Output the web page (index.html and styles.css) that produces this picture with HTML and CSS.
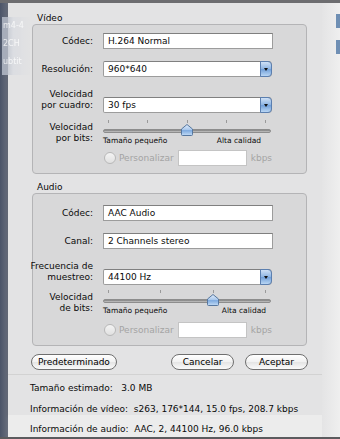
FILE: index.html
```html
<!DOCTYPE html>
<html lang="es">

<head>
  <meta charset="utf-8">
  <title>Ajustes</title>
  <meta name="viewport" content="width=device-width, initial-scale=1.0">
  <link rel="stylesheet" href="styles.css">
</head>

<body>
  <div class="screen">
    <!-- window behind the sheet, seen through it -->
    <div class="ghost">
      <span>m4-4</span>
      <span>2CH</span>
      <span>ubtit</span>
    </div>
    <div class="edge-left"></div>
    <div class="window">
      <div class="sheet">
        <!-- video settings -->
        <div class="group-title">Vídeo</div>
        <div class="group">
          <div class="row">
            <label>Códec:</label>
            <div class="field">H.264 Normal</div>
          </div>
          <div class="row">
            <label>Resolución:</label>
            <div class="select">960*640<span class="arrow"></span></div>
          </div>
          <div class="row">
            <label><span>Velocidad</span><span>por cuadro:</span></label>
            <div class="select">30 fps<span class="arrow"></span></div>
          </div>
          <div class="row slider-row">
            <label><span>Velocidad</span><span>por bits:</span></label>
            <div class="slider">
              <div class="ticks"><i></i><i></i><i></i><i></i><i></i></div>
              <div class="track">
                <svg class="thumb" style="left: calc(5px + 0.5 * (100% - 10px) - 6px)" width="12" height="12" viewBox="0 0 12 12">
                  <defs>
                    <linearGradient id="tg1" x1="0" y1="0" x2="0" y2="1">
                      <stop offset="0" stop-color="#e4eefa"/>
                      <stop offset="0.5" stop-color="#a6c6ec"/>
                      <stop offset="0.55" stop-color="#7fabe0"/>
                      <stop offset="1" stop-color="#c3dcf6"/>
                    </linearGradient>
                  </defs>
                  <path d="M6 0.5 L11.5 5 L11.5 10.5 Q11.5 11.5 10.5 11.5 L1.5 11.5 Q0.5 11.5 0.5 10.5 L0.5 5 Z" fill="url(#tg1)" stroke="#56779f" stroke-width="1"/>
                </svg>
              </div>
              <div class="slider-labels"><span>Tamaño pequeño</span><span class="hi">Alta calidad</span></div>
            </div>
          </div>
          <div class="row custom-row">
            <label></label>
            <div class="custom">
              <span class="radio"></span>
              <span class="muted">Personalizar</span>
              <span class="field small"></span>
              <span class="muted">kbps</span>
            </div>
          </div>
        </div>

        <!-- audio settings -->
        <div class="group-title">Audio</div>
        <div class="group audio">
          <div class="row">
            <label>Códec:</label>
            <div class="field">AAC Audio</div>
          </div>
          <div class="row">
            <label>Canal:</label>
            <div class="field">2 Channels stereo</div>
          </div>
          <div class="row">
            <label><span>Frecuencia de</span><span>muestreo:</span></label>
            <div class="select">44100 Hz<span class="arrow"></span></div>
          </div>
          <div class="row slider-row">
            <label><span>Velocidad</span><span>de bits:</span></label>
            <div class="slider">
              <div class="ticks"><i></i><i></i><i></i><i></i></div>
              <div class="track">
                <svg class="thumb" style="left: calc(5px + 0.6667 * (100% - 10px) - 6px)" width="12" height="12" viewBox="0 0 12 12">
                  <path d="M6 0.5 L11.5 5 L11.5 10.5 Q11.5 11.5 10.5 11.5 L1.5 11.5 Q0.5 11.5 0.5 10.5 L0.5 5 Z" fill="url(#tg1)" stroke="#56779f" stroke-width="1"/>
                </svg>
              </div>
              <div class="slider-labels"><span>Tamaño pequeño</span><span class="hi">Alta calidad</span></div>
            </div>
          </div>
          <div class="row custom-row">
            <label></label>
            <div class="custom">
              <span class="radio"></span>
              <span class="muted">Personalizar</span>
              <span class="field small"></span>
              <span class="muted">kbps</span>
            </div>
          </div>
        </div>

        <div class="buttons">
          <button class="btn">Predeterminado</button>
          <span class="spacer"></span>
          <button class="btn btn-cancel">Cancelar</button>
          <button class="btn btn-ok">Aceptar</button>
        </div>

        <div class="info">
          <p>Tamaño estimado:&nbsp;&nbsp; 3.0 MB</p>
          <p class="last">Información de vídeo:&nbsp; s263, 176*144, 15.0 fps, 208.7 kbps</p>
        </div>
      </div>
      <div class="info outside">
        <p>Información de audio:&nbsp; AAC, 2, 44100 Hz, 96.0 kbps</p>
      </div>
    </div>
    <div class="edge-right"><i></i><i></i></div>
  </div>
</body>

</html>
```

FILE: styles.css
```css
:root {
  --sheet-color: #e3e3e4;
  --group-color: #d8d8d9;
  --group-border: #b4b4b6;
  --window-color: #ececec;
  --text-color: #0a0a0a;
  --muted-color: #a4a4a4;
  --field-border: #9c9c9c;
}

* {
  box-sizing: border-box;
}

body {
  margin: 0;
  font-family: "DejaVu Sans", sans-serif;
  font-size: 9px;
  color: var(--text-color);
  background: var(--window-color);
}

.screen {
  position: relative;
  display: flex;
  width: 340px;
  height: 439px;
  overflow: hidden;
  border-top: 3px solid #6d6d70;
  border-bottom: 2px solid #5b5b5e;
}

.ghost {
  position: absolute;
  left: 2px;
  top: 14px;
  width: 28px;
  height: 58px;
  display: flex;
  flex-direction: column;
  gap: 8px;
  padding: 4px 0 0 1px;
  background: linear-gradient(to right, rgba(175, 182, 196, 0.9), rgba(215, 218, 224, 0.6) 40%, rgba(227, 227, 228, 0));
  color: rgba(255, 255, 255, 0.75);
  font-size: 8px;
  line-height: 10px;
  filter: blur(0.6px);
}

.edge-left {
  width: 8px;
  flex: none;
  background: linear-gradient(to right, #4b5468, #686e7c);
}

.edge-right {
  width: 18px;
  flex: none;
  background: linear-gradient(to right, #e4e4e5, #efefef);
  display: flex;
  flex-direction: column;
  align-items: flex-end;
  padding-top: 11px;
  gap: 12px;
}

.edge-right i {
  display: block;
  width: 4px;
  height: 14px;
  background: #6f8fb4;
}

.window {
  flex: 1;
  display: flex;
  flex-direction: column;
}

.sheet {
  background: var(--sheet-color);
  padding-top: 9px;
  box-shadow: 0 2px 3px rgba(0, 0, 0, 0.12);
}

.group-title {
  padding-left: 29px;
  line-height: 12px;
  height: 12px;
}

.group {
  margin: 0 15px 7px 24px;
  background: var(--group-color);
  border: 1px solid var(--group-border);
  border-radius: 4px;
  padding: 8px 0 7px;
}

.group.audio {
  padding-top: 11px;
  margin-bottom: 8px;
}

.row {
  display: grid;
  grid-template-columns: 60px 170px;
  column-gap: 10px;
  align-items: end;
  height: 16px;
  margin-bottom: 12px;
}

.row label {
  display: flex;
  flex-direction: column;
  align-items: flex-end;
  white-space: nowrap;
  line-height: 11px;
  padding-bottom: 2px;
}

.field {
  height: 16px;
  background: #fff;
  border: 1px solid var(--field-border);
  border-top-color: #7f7f7f;
  padding-left: 4px;
  line-height: 14px;
}

.select {
  position: relative;
  height: 16px;
  width: 169px;
  background: #fff;
  border: 1px solid var(--field-border);
  border-top-color: #808080;
  border-radius: 2px 4px 4px 2px;
  padding-left: 4px;
  line-height: 14px;
}

.select .arrow {
  position: absolute;
  top: -1px;
  right: -1px;
  width: 12px;
  height: 16px;
  border-radius: 0 4px 4px 0;
  border: 1px solid #5b7fb0;
  background: linear-gradient(#cfe1f6, #8cb3e2 50%, #6f9ed8 51%, #b9d6f4);
}

.select .arrow::after {
  content: "";
  position: absolute;
  left: 3px;
  top: 6px;
  border-left: 2.5px solid transparent;
  border-right: 2.5px solid transparent;
  border-top: 3px solid #111;
}

.slider-row {
  height: 28px;
  margin-top: 14px;
  margin-bottom: 0;
  align-items: center;
}

.slider-row label {
  padding-bottom: 0;
}

.audio .slider-row {
  margin-top: 10px;
}

.slider {
  width: 168px;
}

.ticks {
  display: flex;
  justify-content: space-between;
  padding: 0 5px;
  height: 3px;
}

.ticks i {
  width: 1px;
  height: 3px;
  background: #9a9a9a;
}

.track {
  position: relative;
  margin-top: 6px;
  height: 4px;
  border-radius: 2px;
  background: linear-gradient(#7c7c7c, #a9a9a9 60%, #c8c8c8);
  border: 1px solid #8d8d8d;
}

.thumb {
  position: absolute;
  top: -6px;
}

.slider-labels {
  display: flex;
  justify-content: space-between;
  font-size: 7.5px;
  line-height: 10px;
  margin-top: 3px;
}

.slider-labels .hi {
  padding-right: 10px;
}

.audio .slider-labels .hi {
  padding-right: 5px;
}

.custom-row {
  margin-top: 3px;
  margin-bottom: 0;
}

.audio .custom-row {
  margin-top: 5px;
}

.custom {
  display: flex;
  align-items: center;
  gap: 3px;
  padding-left: 1px;
  width: 190px;
}

.radio {
  width: 12px;
  height: 12px;
  border-radius: 50%;
  border: 1px solid #b8b8b8;
  background: linear-gradient(#f4f4f4, #e0e0e0);
}

.muted {
  color: var(--muted-color);
  font-size: 9px;
}

.field.small {
  width: 69px;
  margin: 0 1px;
  border-color: #c4c4c4;
}

.buttons {
  display: flex;
  align-items: center;
  gap: 11px;
  padding: 0 14px 0 23px;
  height: 16px;
  margin-bottom: 4px;
}

.spacer {
  flex: 1;
}

.btn {
  font-family: inherit;
  font-size: 9px;
  color: #000;
  height: 16px;
  padding: 0 6px;
  border-radius: 8px;
  border: 1px solid #6f6f6f;
  background: linear-gradient(#ffffff, #f1f1f1 50%, #e4e4e4 51%, #fafafa);
  line-height: 12px;
}

.btn-cancel,
.btn-ok {
  width: 63px;
}

.info {
  padding: 3px 0 0 22px;
  border-top: 1px solid #d2d2d2;
}

.info p {
  margin: 0;
  line-height: 21px;
  height: 21px;
}

.info p.last {
  height: 16px;
}

.info.outside {
  flex: 1;
  border-top: none;
  background: var(--window-color);
  padding-top: 8px;
}

.info.outside p {
  line-height: 12px;
  height: 12px;
}
```
